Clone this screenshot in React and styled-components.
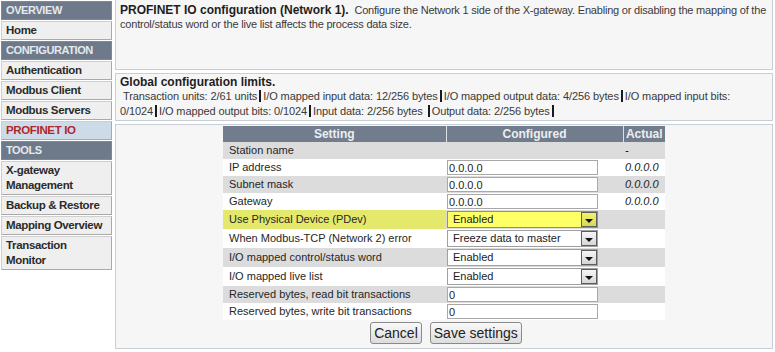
import React from 'react';
import styled, { createGlobalStyle, css } from 'styled-components';

const GlobalStyle = createGlobalStyle`
  html, body { margin: 0; padding: 0; background: #ffffff; }
  body { font-family: "Liberation Sans", Arial, sans-serif; color: #333; }
  * { box-sizing: border-box; }
`;

const Page = styled.div`
  display: flex;
  width: 775px;
  height: 352px;
  overflow: hidden;
`;

const Nav = styled.nav`
  width: 112px;
  flex: none;
  display: flex;
  flex-direction: column;
  gap: 1px;
  padding: 1px 0 0 1px;
  margin-right: 3px;
`;

const NavHeader = styled.div`
  background: #6e7a8a;
  color: #e6e9ee;
  font-weight: bold;
  font-size: 11px;
  letter-spacing: -0.4px;
  line-height: 15px;
  padding: 1px 4px;
  border: 1px solid #7d8898;
`;

const NavItem = styled.div`
  background: ${p => (p.$active ? '#cddbe8' : '#efefef')};
  color: ${p => (p.$active ? '#b1262b' : '#2b2b2b')};
  font-weight: bold;
  font-size: 11.5px;
  letter-spacing: -0.35px;
  line-height: 15px;
  padding: 1px 1px 1px 4px;
  border: 1px solid;
  border-color: #cfcfcf #a9a9a9 #a9a9a9 #cfcfcf;
`;

const Main = styled.main`
  flex: 1;
  display: flex;
  flex-direction: column;
  gap: 3px;
  padding-right: 2px;
`;

const Panel = styled.section`
  background: #f6f6f6;
  border: 1px solid #c8ced6;
  ${p => p.$noTop && css`border-top: none;`}
`;

const Intro = styled(Panel)`
  height: 70px;
  padding: 3px 4px;
  font-size: 11px;
  line-height: 14px;
  letter-spacing: -0.2px;
  color: #3a3a3a;
`;

const IntroTitle = styled.b`
  font-size: 12px;
  letter-spacing: 0;
  color: #1e1e1e;
`;

const Limits = styled(Panel)`
  height: 48px;
  padding: 1px 4px 1px 4px;
`;

const LimitsTitle = styled.div`
  font-weight: bold;
  font-size: 12px;
  line-height: 14px;
  color: #1e1e1e;
`;

const LimitsLines = styled.div`
  font-size: 11px;
  line-height: 15px;
  color: #3a3a3a;
  letter-spacing: -0.1px;
`;

const Limit = styled.span`
  border-right: 2px solid #1a1a1a;
  padding-right: 2px;
  margin-right: 2px;
`;

const Settings = styled(Panel)`
  height: 225px;
  padding-top: 1px;
  display: flex;
  flex-direction: column;
  align-items: center;
`;

const Table = styled.table`
  border-collapse: collapse;
  table-layout: fixed;
  width: 442px;
  font-size: 11px;
`;

const Th = styled.th`
  background: #717d8d;
  color: #eceef1;
  font-size: 12px;
  font-weight: bold;
  height: 16px;
  padding: 0;
  line-height: 15px;
  ${p => p.$sep && css`border-left: 1px solid #dde1e6;`}
`;

const Tr = styled.tr`
  background: ${p => (p.$shade ? '#dcdcdc' : '#ffffff')};
`;

const SettingCell = styled.td`
  height: ${p => (p.$tall ? '19px' : '17px')};
  padding: 0 0 0 6px;
  color: #262626;
  white-space: nowrap;
  line-height: 15px;
  ${p => p.$highlight && css`background: #e4e96c;`}
`;

const ConfigCell = styled.td`
  padding: 0 0 0 1px;
  vertical-align: middle;
`;

const ActualCell = styled.td`
  padding: 0 0 0 2px;
  font-style: italic;
  color: #222;
  line-height: 15px;
`;

const TextInput = styled.input`
  display: block;
  width: 151px;
  height: 15px;
  border: 1px solid #a8a8a8;
  background: #fff;
  font-family: "Liberation Sans", Arial, sans-serif;
  font-size: 11px;
  color: #222;
  padding: 0 1px;
  margin: 0;
  outline: none;
`;

const SelectBox = styled.div`
  display: flex;
  align-items: center;
  width: 151px;
  height: 17px;
  border: 1px solid ${p => (p.$highlight ? '#9a9a3a' : '#a0a0a0')};
  background: ${p => (p.$highlight ? '#ffff66' : '#ffffff')};
  font-size: 11px;
  color: #222;
`;

const SelectText = styled.span`
  flex: 1;
  padding-left: 5px;
  line-height: 15px;
  white-space: nowrap;
`;

const SelectArrow = styled.span`
  flex: none;
  width: 16px;
  height: 15px;
  border: 1px solid #5e5e5e;
  background: ${p => (p.$highlight ? 'linear-gradient(#f2f26a, #d8d855)' : 'linear-gradient(#f7f7f7, #d6d6d6)')};
  display: flex;
  align-items: flex-end;
  justify-content: center;
  padding-bottom: 3px;
`;

const Triangle = styled.span`
  width: 0;
  height: 0;
  border-left: 4px solid transparent;
  border-right: 4px solid transparent;
  border-top: 4px solid #111;
`;

const Buttons = styled.div`
  display: flex;
  gap: 8px;
  margin-top: 2px;
  margin-left: 4px;
`;

const Button = styled.button`
  font-family: "Liberation Sans", Arial, sans-serif;
  font-size: 14px;
  color: #222;
  height: 22px;
  padding: 0 3px;
  border: 1px solid #8a8a8a;
  border-radius: 3px;
  background: linear-gradient(#f9f9f9, #dcdcdc);
  line-height: 18px;
`;

const rows = [
  { label: 'Station name', actual: '-' },
  { label: 'IP address', input: '0.0.0.0', actual: '0.0.0.0' },
  { label: 'Subnet mask', input: '0.0.0.0', actual: '0.0.0.0' },
  { label: 'Gateway', input: '0.0.0.0', actual: '0.0.0.0' },
  { label: 'Use Physical Device (PDev)', select: 'Enabled', highlight: true },
  { label: 'When Modbus-TCP (Network 2) error', select: 'Freeze data to master' },
  { label: 'I/O mapped control/status word', select: 'Enabled' },
  { label: 'I/O mapped live list', select: 'Enabled' },
  { label: 'Reserved bytes, read bit transactions', input: '0' },
  { label: 'Reserved bytes, write bit transactions', input: '0' },
];

const limits = [
  'Transaction units: 2/61 units',
  'I/O mapped input data: 12/256 bytes',
  'I/O mapped output data: 4/256 bytes',
  'I/O mapped input bits: 0/1024',
  'I/O mapped output bits: 0/1024',
  'Input data: 2/256 bytes\u00a0',
  'Output data: 2/256 bytes',
];

export default function App() {
  return (
    <>
      <GlobalStyle />
      <Page>
        <Nav>
          <NavHeader>OVERVIEW</NavHeader>
          <NavItem>Home</NavItem>
          <NavHeader>CONFIGURATION</NavHeader>
          <NavItem>Authentication</NavItem>
          <NavItem>Modbus Client</NavItem>
          <NavItem>Modbus Servers</NavItem>
          <NavItem $active>PROFINET IO</NavItem>
          <NavHeader>TOOLS</NavHeader>
          <NavItem>X-gateway<br />Management</NavItem>
          <NavItem>Backup &amp; Restore</NavItem>
          <NavItem>Mapping Overview</NavItem>
          <NavItem>Transaction<br />Monitor</NavItem>
        </Nav>
        <Main>
          <Intro $noTop>
            <IntroTitle>PROFINET IO configuration (Network 1).</IntroTitle>
            {'\u00a0 Configure the Network 1 side of the X-gateway. Enabling or disabling the mapping of the control/status word or the live list affects the process data size.'}
          </Intro>
          <Limits>
            <LimitsTitle>Global configuration limits.</LimitsTitle>
            <LimitsLines>
              {'\u00a0'}
              {limits.map(l => (
                <Limit key={l}>{l}</Limit>
              ))}
            </LimitsLines>
          </Limits>
          <Settings>
            <Table>
              <colgroup>
                <col style={{ width: 223 }} />
                <col style={{ width: 177 }} />
                <col style={{ width: 42 }} />
              </colgroup>
              <thead>
                <tr>
                  <Th>Setting</Th>
                  <Th $sep>Configured</Th>
                  <Th $sep>Actual</Th>
                </tr>
              </thead>
              <tbody>
                {rows.map((r, i) => (
                  <Tr key={r.label} $shade={i % 2 === 0}>
                    <SettingCell $tall={!!r.select} $highlight={r.highlight}>{r.label}</SettingCell>
                    <ConfigCell>
                      {r.input !== undefined && <TextInput defaultValue={r.input} />}
                      {r.select && (
                        <SelectBox $highlight={r.highlight}>
                          <SelectText>{r.select}</SelectText>
                          <SelectArrow $highlight={r.highlight}><Triangle /></SelectArrow>
                        </SelectBox>
                      )}
                    </ConfigCell>
                    <ActualCell>{r.actual}</ActualCell>
                  </Tr>
                ))}
              </tbody>
            </Table>
            <Buttons>
              <Button>Cancel</Button>
              <Button>Save settings</Button>
            </Buttons>
          </Settings>
        </Main>
      </Page>
    </>
  );
}
